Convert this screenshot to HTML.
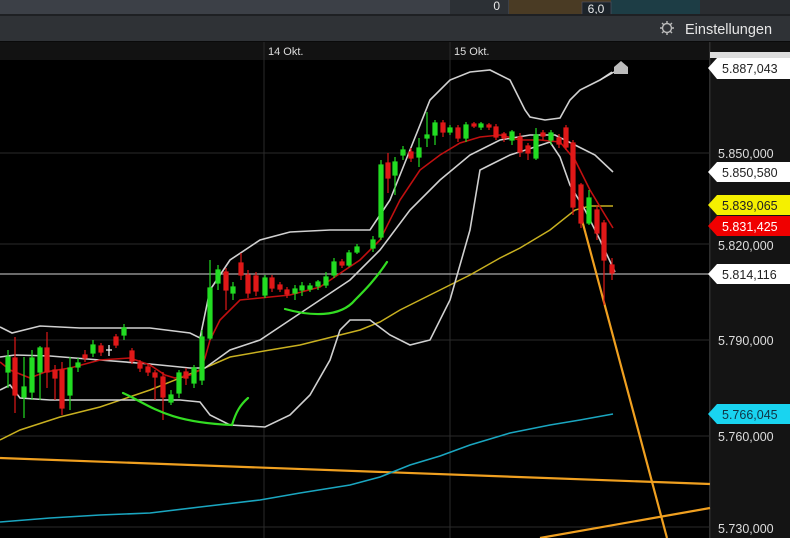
<!DOCTYPE html>
<html><head><meta charset="utf-8"><style>
html,body{margin:0;padding:0;width:790px;height:538px;overflow:hidden;background:#000;font-family:"Liberation Sans",sans-serif}
</style></head><body>
<svg width="790" height="538" viewBox="0 0 790 538" xmlns="http://www.w3.org/2000/svg" font-family="Liberation Sans, sans-serif">
<rect x="0" y="0" width="790" height="538" fill="#000"/>
<!-- top bar -->
<rect x="0" y="0" width="790" height="14" fill="#3c4047"/>
<rect x="450" y="0" width="58" height="14" fill="#2c3035"/>
<text x="500" y="10" fill="#e8e8e8" font-size="12" text-anchor="end">0</text>
<rect x="509" y="0" width="102" height="14" fill="#4a3b24"/>
<rect x="611" y="0" width="89" height="14" fill="#1d3d45"/>
<rect x="582" y="2" width="29" height="13" fill="#1c232a" stroke="#556" stroke-width="0.6"/>
<text x="596" y="13" fill="#e8e8e8" font-size="12" text-anchor="middle">6,0</text>
<rect x="700" y="0" width="90" height="14" fill="#2a2d31"/>
<rect x="0" y="14" width="790" height="2" fill="#1e2023"/>
<rect x="0" y="16" width="790" height="25" fill="#2f3236"/>
<!-- gear -->
<g stroke="#bbb" stroke-width="1.4" fill="none">
<circle cx="667" cy="28" r="4.5"/>
<path d="M667 21v2.5M667 32.5v2.5M660 28h2.5M671.5 28h2.5M662 23l1.8 1.8M670.2 31.2l1.8 1.8M672 23l-1.8 1.8M663.8 31.2l-1.8 1.8"/>
</g>
<text x="685" y="34" fill="#e6e6e6" font-size="14.5">Einstellungen</text>
<rect x="0" y="41" width="790" height="1" fill="#0a0a0a"/>
<rect x="0" y="42" width="710" height="18" fill="#121212"/>
<text x="268" y="55" fill="#ddd" font-size="11">14 Okt.</text>
<text x="454" y="55" fill="#ddd" font-size="11">15 Okt.</text>
<!-- axis column -->
<rect x="710" y="42" width="80" height="496" fill="#141414"/>
<rect x="709" y="42" width="1.5" height="496" fill="#2e2e2e"/>
<!-- grid -->
<g stroke="#2a2a2a" stroke-width="1">
<line x1="0" y1="153" x2="710" y2="153"/><line x1="0" y1="244" x2="710" y2="244"/>
<line x1="0" y1="340" x2="710" y2="340"/><line x1="0" y1="436" x2="710" y2="436"/>
<line x1="0" y1="527" x2="710" y2="527"/>
<line x1="264" y1="42" x2="264" y2="538"/><line x1="450" y1="42" x2="450" y2="538"/>
</g>
<line x1="0" y1="274" x2="710" y2="274" stroke="#aaa" stroke-width="1.3"/>
<!-- orange lines -->
<g stroke="#f0a020" stroke-width="2.2" fill="none">
<line x1="0" y1="458" x2="710" y2="484"/>
<line x1="540" y1="538" x2="710" y2="508"/>
<line x1="582" y1="220" x2="667" y2="538"/>
</g>
<!-- cyan -->
<polyline fill="none" stroke="#1aa6c0" stroke-width="1.6" points="0,522 50,518 100,515 150,513 200,507 260,500 300,493 350,485 380,477 410,465 440,456 470,445 510,433 550,425 580,420 613,414"/>
<!-- yellow -->
<polyline fill="none" stroke="#c8b020" stroke-width="1.5" points="0,440 20,430 60,417 100,407 150,390 200,370 230,357 270,350 300,345 340,335 360,330 380,322 400,310 440,290 470,275 500,258 520,248 550,230 575,210 590,206 613,206"/>
<!-- bollinger -->
<g fill="none" stroke="#d0d0d0" stroke-width="1.6">
<polyline points="0,327 12,333 40,326 80,328 150,328 190,333 200,338 210,290 230,260 260,240 290,232 330,230 370,230 390,200 410,150 430,100 450,80 470,72 490,70 510,80 525,110 530,117 545,120 560,118 570,100 580,90 600,80 612,72"/>
<polyline points="0,357 15,355 50,356 100,360 150,364 190,368 205,368 230,350 260,340 290,320 320,300 350,280 380,250 410,210 440,180 470,155 500,140 530,135 555,135 575,145 595,155 613,172"/>
<polyline points="0,390 10,385 20,398 50,400 100,400 160,400 180,400 200,402 210,415 230,425 265,427 290,415 310,395 330,360 340,330 350,320 370,320 390,335 410,345 430,340 450,300 470,230 480,170 490,165 510,155 535,147 550,142 560,157 570,185 585,210 600,240 615,272"/>
</g>
<!-- red ema -->
<polyline fill="none" stroke="#c01010" stroke-width="1.6" points="0,362 10,370 30,378 45,372 70,368 100,360 130,358 150,365 165,375 175,378 190,375 200,370 205,358 210,340 220,320 240,300 260,298 290,295 320,287 345,270 360,260 380,240 400,200 420,170 440,155 460,143 480,137 500,135 520,140 540,140 560,142 575,160 590,190 605,215 613,228"/>
<!-- candles -->
<g stroke-width="1.2">
<g stroke="#22dd22" fill="#22dd22">
<line x1="8" y1="350" x2="8" y2="388"/><rect x="6" y="357" width="4" height="15"/>
<line x1="24" y1="357" x2="24" y2="418"/><rect x="22" y="387" width="4" height="10"/>
<line x1="32" y1="350" x2="32" y2="400"/><rect x="30" y="358" width="4" height="34"/>
<line x1="40" y1="346" x2="40" y2="400"/><rect x="38" y="348" width="4" height="24"/>
<line x1="70" y1="357" x2="70" y2="410"/><rect x="68" y="368" width="4" height="27"/>
<line x1="78" y1="358" x2="78" y2="372"/><rect x="76" y="363" width="4" height="4"/>
<line x1="93" y1="340" x2="93" y2="357"/><rect x="91" y="345" width="4" height="8"/>
<line x1="124" y1="324" x2="124" y2="340"/><rect x="122" y="328" width="4" height="7"/>
<line x1="171" y1="390" x2="171" y2="405"/><rect x="169" y="395" width="4" height="7"/>
<line x1="179" y1="370" x2="179" y2="398"/><rect x="177" y="373" width="4" height="20"/>
<line x1="194" y1="365" x2="194" y2="388"/><rect x="192" y="368" width="4" height="15"/>
<line x1="202" y1="330" x2="202" y2="385"/><rect x="200" y="337" width="4" height="43"/>
<line x1="210" y1="260" x2="210" y2="340"/><rect x="208" y="288" width="4" height="50"/>
<line x1="218" y1="265" x2="218" y2="290"/><rect x="216" y="270" width="4" height="13"/>
<line x1="233" y1="282" x2="233" y2="300"/><rect x="231" y="287" width="4" height="6"/>
<line x1="265" y1="275" x2="265" y2="298"/><rect x="263" y="278" width="4" height="17"/>
<line x1="295" y1="285" x2="295" y2="300"/><rect x="293" y="289" width="4" height="4"/>
<line x1="302" y1="282" x2="302" y2="296"/><rect x="300" y="286" width="4" height="4"/>
<line x1="310" y1="283" x2="310" y2="292"/><rect x="308" y="286" width="4" height="3"/>
<line x1="318" y1="280" x2="318" y2="290"/><rect x="316" y="282" width="4" height="4"/>
<line x1="326" y1="272" x2="326" y2="288"/><rect x="324" y="277" width="4" height="8"/>
<line x1="334" y1="258" x2="334" y2="278"/><rect x="332" y="262" width="4" height="13"/>
<line x1="349" y1="250" x2="349" y2="267"/><rect x="347" y="253" width="4" height="12"/>
<line x1="357" y1="244" x2="357" y2="254"/><rect x="355" y="247" width="4" height="5"/>
<line x1="373" y1="236" x2="373" y2="252"/><rect x="371" y="240" width="4" height="8"/>
<line x1="381" y1="160" x2="381" y2="240"/><rect x="379" y="165" width="4" height="72"/>
<line x1="395" y1="157" x2="395" y2="195"/><rect x="393" y="162" width="4" height="13"/>
<line x1="403" y1="146" x2="403" y2="160"/><rect x="401" y="150" width="4" height="5"/>
<line x1="419" y1="138" x2="419" y2="167"/><rect x="417" y="148" width="4" height="9"/>
<line x1="427" y1="112" x2="427" y2="147"/><rect x="425" y="135" width="4" height="3"/>
<line x1="435" y1="120" x2="435" y2="145"/><rect x="433" y="123" width="4" height="12"/>
<line x1="450" y1="125" x2="450" y2="135"/><rect x="448" y="128" width="4" height="4"/>
<line x1="466" y1="122" x2="466" y2="142"/><rect x="464" y="125" width="4" height="13"/>
<line x1="481" y1="122" x2="481" y2="130"/><rect x="479" y="124" width="4" height="3"/>
<line x1="512" y1="130" x2="512" y2="145"/><rect x="510" y="132" width="4" height="8"/>
<line x1="536" y1="128" x2="536" y2="160"/><rect x="534" y="135" width="4" height="23"/>
<line x1="551" y1="130" x2="551" y2="145"/><rect x="549" y="133" width="4" height="7"/>
<line x1="589" y1="190" x2="589" y2="225"/><rect x="587" y="198" width="4" height="25"/>
</g>
<g stroke="#e01818" fill="#e01818">
<line x1="15" y1="337" x2="15" y2="413"/><rect x="13" y="358" width="4" height="37"/>
<line x1="47" y1="332" x2="47" y2="388"/><rect x="45" y="348" width="4" height="24"/>
<line x1="55" y1="365" x2="55" y2="400"/><rect x="53" y="370" width="4" height="8"/>
<line x1="62" y1="362" x2="62" y2="415"/><rect x="60" y="370" width="4" height="38"/>
<line x1="85" y1="350" x2="85" y2="362"/><rect x="83" y="355" width="4" height="3"/>
<line x1="101" y1="343" x2="101" y2="356"/><rect x="99" y="346" width="4" height="6"/>
<line x1="116" y1="334" x2="116" y2="348"/><rect x="114" y="337" width="4" height="8"/>
<line x1="132" y1="348" x2="132" y2="364"/><rect x="130" y="351" width="4" height="10"/>
<line x1="140" y1="360" x2="140" y2="372"/><rect x="138" y="363" width="4" height="5"/>
<line x1="148" y1="364" x2="148" y2="376"/><rect x="146" y="367" width="4" height="5"/>
<line x1="155" y1="370" x2="155" y2="400"/><rect x="153" y="373" width="4" height="4"/>
<line x1="163" y1="372" x2="163" y2="420"/><rect x="161" y="377" width="4" height="20"/>
<line x1="186" y1="368" x2="186" y2="385"/><rect x="184" y="372" width="4" height="6"/>
<line x1="226" y1="268" x2="226" y2="310"/><rect x="224" y="272" width="4" height="18"/>
<line x1="241" y1="253" x2="241" y2="280"/><rect x="239" y="263" width="4" height="12"/>
<line x1="248" y1="270" x2="248" y2="298"/><rect x="246" y="275" width="4" height="18"/>
<line x1="256" y1="272" x2="256" y2="296"/><rect x="254" y="276" width="4" height="15"/>
<line x1="272" y1="275" x2="272" y2="292"/><rect x="270" y="278" width="4" height="10"/>
<line x1="280" y1="282" x2="280" y2="292"/><rect x="278" y="285" width="4" height="4"/>
<line x1="287" y1="287" x2="287" y2="298"/><rect x="285" y="290" width="4" height="4"/>
<line x1="342" y1="259" x2="342" y2="268"/><rect x="340" y="262" width="4" height="3"/>
<line x1="388" y1="153" x2="388" y2="193"/><rect x="386" y="163" width="4" height="15"/>
<line x1="411" y1="148" x2="411" y2="162"/><rect x="409" y="152" width="4" height="6"/>
<line x1="443" y1="120" x2="443" y2="137"/><rect x="441" y="123" width="4" height="9"/>
<line x1="458" y1="125" x2="458" y2="142"/><rect x="456" y="128" width="4" height="10"/>
<line x1="474" y1="122" x2="474" y2="128"/><rect x="472" y="124" width="4" height="2"/>
<line x1="489" y1="123" x2="489" y2="130"/><rect x="487" y="125" width="4" height="2"/>
<line x1="496" y1="124" x2="496" y2="140"/><rect x="494" y="127" width="4" height="10"/>
<line x1="504" y1="132" x2="504" y2="142"/><rect x="502" y="134" width="4" height="4"/>
<line x1="520" y1="133" x2="520" y2="157"/><rect x="518" y="137" width="4" height="15"/>
<line x1="528" y1="143" x2="528" y2="160"/><rect x="526" y="146" width="4" height="7"/>
<line x1="543" y1="130" x2="543" y2="140"/><rect x="541" y="133" width="4" height="3"/>
<line x1="559" y1="134" x2="559" y2="148"/><rect x="557" y="138" width="4" height="6"/>
<line x1="566" y1="125" x2="566" y2="150"/><rect x="564" y="128" width="4" height="19"/>
<line x1="573" y1="140" x2="573" y2="215"/><rect x="571" y="143" width="4" height="64"/>
<line x1="581" y1="183" x2="581" y2="228"/><rect x="579" y="185" width="4" height="38"/>
<line x1="597" y1="205" x2="597" y2="240"/><rect x="595" y="210" width="4" height="23"/>
<line x1="604" y1="220" x2="604" y2="305"/><rect x="602" y="223" width="4" height="37"/>
<line x1="612" y1="258" x2="612" y2="280"/><rect x="610" y="265" width="4" height="8"/>
</g>
<line x1="109" y1="345" x2="109" y2="356" stroke="#fff"/><line x1="106" y1="350" x2="112" y2="350" stroke="#fff"/>
</g>
<!-- green hand-drawn -->
<g fill="none" stroke="#33dd22" stroke-width="2.2" stroke-linecap="round">
<path d="M123 393 C150 405 165 422 232 425 C236 412 240 405 248 398"/>
<path d="M285 309 C310 316 340 318 355 300 C365 290 375 280 387 262"/>
</g>
<!-- marker -->
<line x1="600" y1="80" x2="614" y2="72" stroke="#ddd" stroke-width="1.3"/>
<path d="M614 67 L621 61 L628 67 L628 74 L614 74 Z" fill="#bbb"/>
<!-- axis labels -->
<g font-size="12.5">
<rect x="710" y="52" width="80" height="6" fill="#ddd"/>
<path d="M708 68 L717 58 L790 58 L790 79 L717 79 Z" fill="#fff"/>
<text x="722" y="73" fill="#222">5.887,043</text>
<text x="718" y="158" fill="#ddd">5.850,000</text>
<path d="M708 172 L717 162 L790 162 L790 182 L717 182 Z" fill="#fff"/>
<text x="722" y="177" fill="#222">5.850,580</text>
<path d="M708 205 L717 195 L790 195 L790 215 L717 215 Z" fill="#f5f000"/>
<text x="722" y="210" fill="#222">5.839,065</text>
<path d="M708 226 L717 216 L790 216 L790 236 L717 236 Z" fill="#f00000"/>
<text x="722" y="231" fill="#fff">5.831,425</text>
<text x="718" y="250" fill="#ddd">5.820,000</text>
<path d="M708 274 L717 264 L790 264 L790 284 L717 284 Z" fill="#fff"/>
<text x="722" y="279" fill="#222">5.814,116</text>
<text x="718" y="345" fill="#ddd">5.790,000</text>
<path d="M708 414 L717 404 L790 404 L790 424 L717 424 Z" fill="#19d4f0"/>
<text x="722" y="419" fill="#134">5.766,045</text>
<text x="718" y="441" fill="#ddd">5.760,000</text>
<text x="718" y="533" fill="#ddd">5.730,000</text>
</g>
</svg>
</body></html>
